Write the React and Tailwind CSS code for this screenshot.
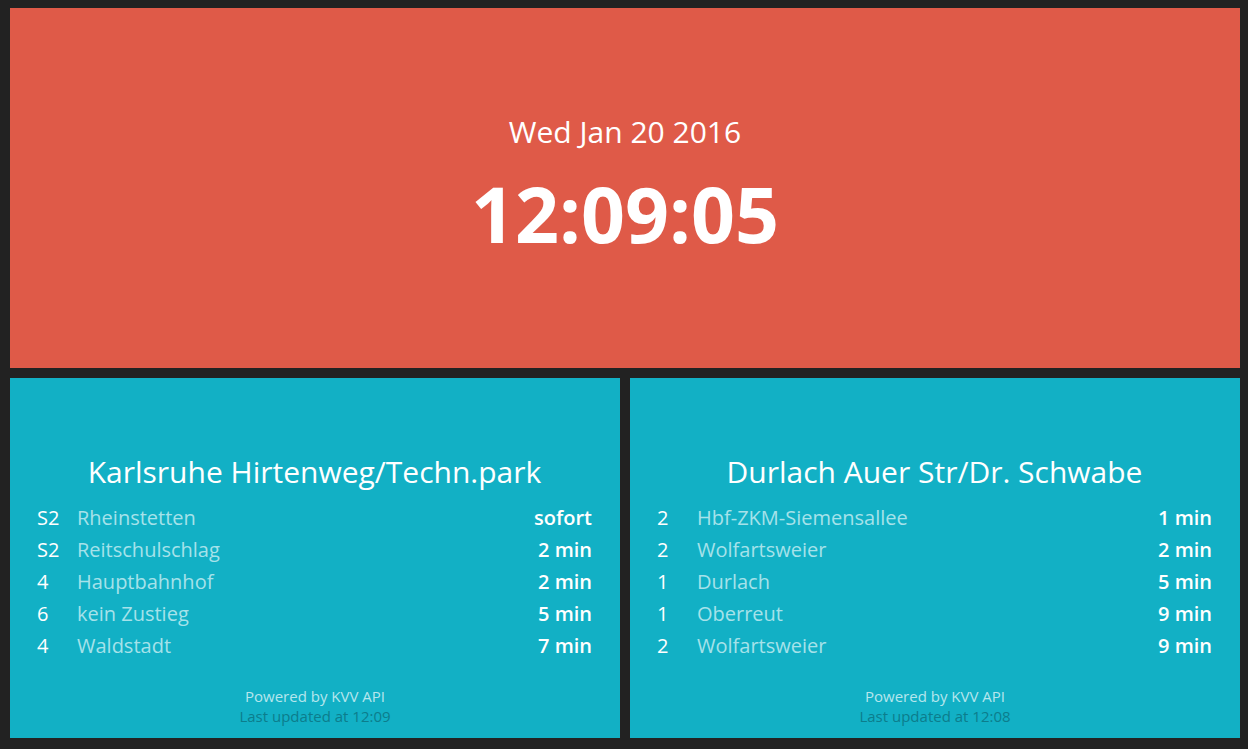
const left = {
  title: "Karlsruhe Hirtenweg/Techn.park",
  rows: [
    ["S2", "Rheinstetten", "sofort"],
    ["S2", "Reitschulschlag", "2 min"],
    ["4", "Hauptbahnhof", "2 min"],
    ["6", "kein Zustieg", "5 min"],
    ["4", "Waldstadt", "7 min"],
  ],
  updated: "12:09",
};
const right = {
  title: "Durlach Auer Str/Dr. Schwabe",
  rows: [
    ["2", "Hbf-ZKM-Siemensallee", "1 min"],
    ["2", "Wolfartsweier", "2 min"],
    ["1", "Durlach", "5 min"],
    ["1", "Oberreut", "9 min"],
    ["2", "Wolfartsweier", "9 min"],
  ],
  updated: "12:08",
};

function Station({ data }) {
  return (
    <div className="flex-1 h-[360px] bg-[#12b0c5] grid grid-rows-[1fr_auto_1fr] text-white">
      <div />
      <div className="pl-[27px] pr-[28px] pb-[2px]">
        <h2 className="text-[30px] leading-[40px] text-center mb-[10px]">{data.title}</h2>
        <div className="flex flex-col">
          {data.rows.map((r, i) => (
            <div key={i} className="flex items-center h-[32px] text-[20px]">
              <span className="w-[40px]">{r[0]}</span>
              <span className="flex-1 text-[#a6e2ea]">{r[1]}</span>
              <span className="font-semibold">{r[2]}</span>
            </div>
          ))}
        </div>
      </div>
      <div className="self-end pb-[12px] text-center text-[15px] leading-[20px]">
        <div className="text-[#b6e6ed]">Powered by KVV API</div>
        <div className="text-[#0c7d8c]">Last updated at {data.updated}</div>
      </div>
    </div>
  );
}

export default function App() {
  return (
    <div
      className="bg-[#222222] w-[1248px] h-[749px] pt-[8px] pl-[10px] pr-[8px] flex flex-col gap-[10px]"
      style={{ fontFamily: '"Open Sans", sans-serif' }}
    >
      <div className="h-[360px] bg-[#df5a48] flex flex-col items-center justify-center pb-[10px] text-white">
        <div className="text-[30px] leading-[40px]">Wed Jan 20 2016</div>
        <div className="text-[77px] leading-[80px] font-bold mt-[22px]">12:09:05</div>
      </div>
      <div className="flex gap-[10px]">
        <Station data={left} />
        <Station data={right} />
      </div>
    </div>
  );
}
